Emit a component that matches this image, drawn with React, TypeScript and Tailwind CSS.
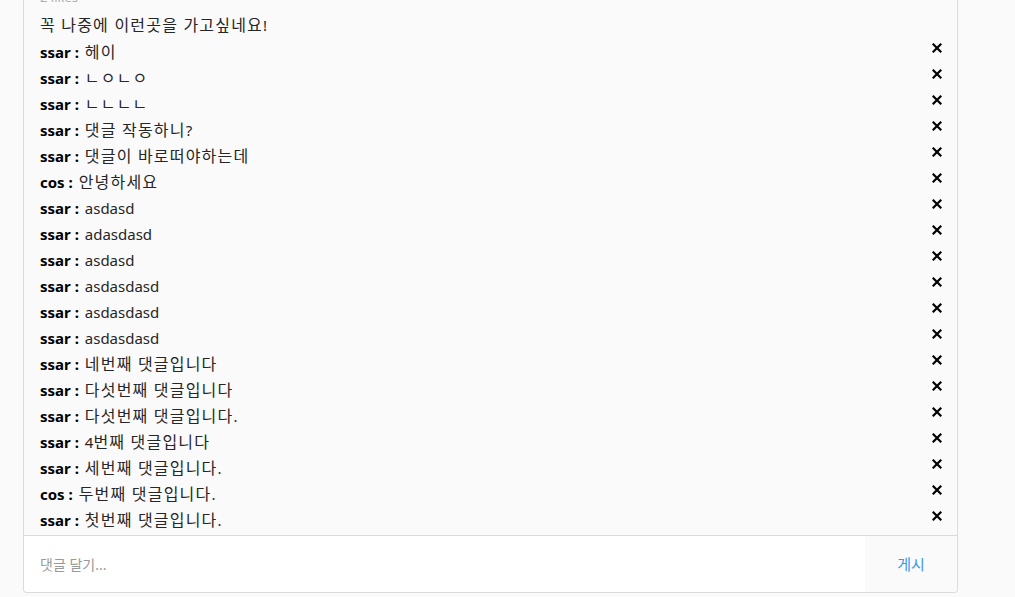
import React from "react";

const comments: { user: string; text: string }[] = [
  { user: "ssar", text: "헤이" },
  { user: "ssar", text: "ㄴㅇㄴㅇ" },
  { user: "ssar", text: "ㄴㄴㄴㄴ" },
  { user: "ssar", text: "댓글 작동하니?" },
  { user: "ssar", text: "댓글이 바로떠야하는데" },
  { user: "cos", text: "안녕하세요" },
  { user: "ssar", text: "asdasd" },
  { user: "ssar", text: "adasdasd" },
  { user: "ssar", text: "asdasd" },
  { user: "ssar", text: "asdasdasd" },
  { user: "ssar", text: "asdasdasd" },
  { user: "ssar", text: "asdasdasd" },
  { user: "ssar", text: "네번째 댓글입니다" },
  { user: "ssar", text: "다섯번째 댓글입니다" },
  { user: "ssar", text: "다섯번째 댓글입니다." },
  { user: "ssar", text: "4번째 댓글입니다" },
  { user: "ssar", text: "세번째 댓글입니다." },
  { user: "cos", text: "두번째 댓글입니다." },
  { user: "ssar", text: "첫번째 댓글입니다." },
];

// hangul glyphs are a bit wider in the original font, so widen those runs
function Ko({ text }: { text: string }) {
  const parts = text.split(/([\u3130-\u318f\uac00-\ud7af][\u3130-\u318f\uac00-\ud7af ]*)/);
  return (
    <>
      {parts.map((p, i) =>
        /[\u3130-\u318f\uac00-\ud7af]/.test(p) ? (
          <span key={i} className="text-[16px] tracking-[1.2px]">
            {p}
          </span>
        ) : (
          <React.Fragment key={i}>{p}</React.Fragment>
        )
      )}
    </>
  );
}

function XIcon() {
  return (
    <svg width="10" height="10" viewBox="0 0 10 10" className="shrink-0 self-start mt-[4px]">
      <path d="M1.5 1.5 L8.5 8.5 M8.5 1.5 L1.5 8.5" stroke="#000" strokeWidth="2.2" strokeLinecap="square" />
    </svg>
  );
}

export default function App() {
  return (
    <div
      className="min-h-[597px] bg-[#fafafa] overflow-hidden"
      style={{ fontFamily: '"Noto Sans", "Noto Sans CJK KR", sans-serif' }}
    >
      <div className="ml-[23px] w-[935px] -mt-[12px] border border-t-0 border-[#dbdbdb] rounded-b-[4px] bg-[#fafafa]">
        {/* likes + caption */}
        <div className="px-[16px] text-[13px] leading-[18px] text-[#b0b0b0]">2 likes</div>
        <div className="px-[16px] pt-[6px] text-[15px] leading-[26px] text-[#262626]">
          <Ko text="꼭 나중에 이런곳을 가고싶네요!" />
        </div>

        {/* comments */}
        <div className="mt-[1px] pb-[2px]">
          {comments.map((c, i) => (
            <div key={i} className="flex items-center justify-between pl-[16px] pr-[15px] h-[26px] text-[15px] text-[#262626]">
              <div className="leading-[26px] whitespace-nowrap">
                <span className="font-bold text-black mr-[2px]">{c.user} :</span>{" "}
                <Ko text={c.text} />
              </div>
              <XIcon />
            </div>
          ))}
        </div>

        {/* comment input */}
        <div className="flex h-[57px] border-t border-[#dbdbdb] rounded-b-[4px] overflow-hidden">
          <input
            className="flex-1 bg-white pl-[16px] text-[14px] text-[#262626] placeholder-[#999] outline-none"
            placeholder="댓글 달기..."
          />
          <button className="w-[92px] bg-[#fafafa] text-[15px] text-[#3897f0]">게시</button>
        </div>
      </div>
    </div>
  );
}
